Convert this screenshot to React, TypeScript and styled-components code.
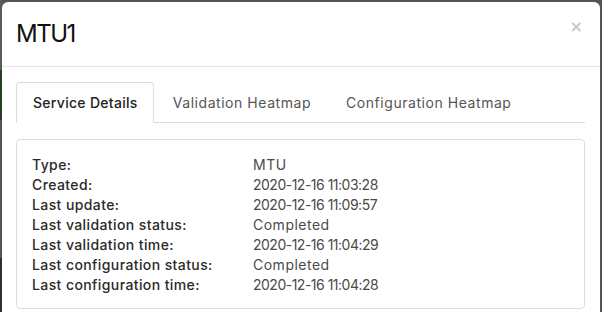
import React from "react";
import styled, { createGlobalStyle } from "styled-components";

const Global = createGlobalStyle`
  html, body { margin: 0; padding: 0; }
  body {
    width: 602px;
    height: 312px;
    overflow: hidden;
    font-family: Inter, "Open Sans", sans-serif;
    background-color: #545454;
    background-image: linear-gradient(
      to bottom,
      #5a5a5a 0 70px,
      #23401f 70px 120px,
      #555555 120px 258px,
      #2f2f2f 258px 312px
    );
    background-size: 2px 312px;
    background-repeat: no-repeat;
  }
`;

const Modal = styled.div`
  margin: 2px 0 0 2px;
  width: 598px;
  height: 320px;
  background: #fff;
  border-radius: 6px 6px 0 0;
  box-sizing: border-box;
  display: flex;
  flex-direction: column;
`;

const Header = styled.div`
  height: 65px;
  box-sizing: border-box;
  padding: 0 14px 0 14px;
  border-bottom: 1px solid #e5e5e5;
  display: flex;
  align-items: center;
  justify-content: space-between;
`;

const Title = styled.h4`
  margin: 0;
  font-size: 24px;
  font-weight: 400;
  color: #111;
  letter-spacing: -1.5px;
  position: relative;
  top: -1px;
`;

const Close = styled.button`
  border: 0;
  background: none;
  padding: 0;
  font-size: 16px;
  line-height: 1;
  color: #c8c8c8;
  font-weight: 700;
  cursor: pointer;
  align-self: flex-start;
  margin-top: 17px;
  margin-right: 3px;
  font-family: "DejaVu Sans", sans-serif;
`;

const Body = styled.div`
  padding: 15px 15px 0 14px;
`;

const TabList = styled.div`
  display: flex;
  border-bottom: 1px solid #dddddd;
`;

const Tab = styled.div<{ $active?: boolean }>`
  height: 41px;
  margin-bottom: -1px;
  box-sizing: border-box;
  padding: 0 15px 0 16px;
  margin-right: 2px;
  display: flex;
  align-items: center;
  font-size: 14px;
  letter-spacing: ${(p) => (p.$active ? "0.3px" : "0.55px")};
  color: ${(p) => (p.$active ? "#222" : "#555")};
  font-weight: ${(p) => (p.$active ? 500 : 400)};
  border: 1px solid ${(p) => (p.$active ? "#dddddd" : "transparent")};
  border-bottom-color: ${(p) => (p.$active ? "#fff" : "transparent")};
  border-radius: 4px 4px 0 0;
  background: ${(p) => (p.$active ? "#fff" : "transparent")};
`;

const Card = styled.div`
  margin-top: 16px;
  border: 1px solid #dddddd;
  border-radius: 4px;
  padding: 15px 15px 14px 15px;
  height: 170px;
  box-sizing: border-box;
`;

const Grid = styled.div`
  display: grid;
  grid-template-columns: 221px 1fr;
  font-size: 14px;
  line-height: 20px;
`;

const Label = styled.div`
  color: #2a2a2a;
  font-weight: 500;
  letter-spacing: 0.4px;
`;

const Value = styled.div<{ $numeric?: boolean }>`
  color: #4a4a4a;
  font-weight: 400;
  letter-spacing: ${(p) => (p.$numeric ? "-0.5px" : "0.5px")};
`;

const rows: [string, string][] = [
  ["Type:", "MTU"],
  ["Created:", "2020-12-16 11:03:28"],
  ["Last update:", "2020-12-16 11:09:57"],
  ["Last validation status:", "Completed"],
  ["Last validation time:", "2020-12-16 11:04:29"],
  ["Last configuration status:", "Completed"],
  ["Last configuration time:", "2020-12-16 11:04:28"],
];

export default function App() {
  return (
    <>
      <Global />
      <Modal>
        <Header>
          <Title>MTU1</Title>
          <Close aria-label="Close">×</Close>
        </Header>
        <Body>
          <TabList>
            <Tab $active>Service Details</Tab>
            <Tab>Validation Heatmap</Tab>
            <Tab>Configuration Heatmap</Tab>
          </TabList>
          <Card>
            <Grid>
              {rows.map(([l, v]) => (
                <React.Fragment key={l}>
                  <Label>{l}</Label>
                  <Value $numeric={/\d/.test(v)}>{v}</Value>
                </React.Fragment>
              ))}
            </Grid>
          </Card>
        </Body>
      </Modal>
    </>
  );
}
